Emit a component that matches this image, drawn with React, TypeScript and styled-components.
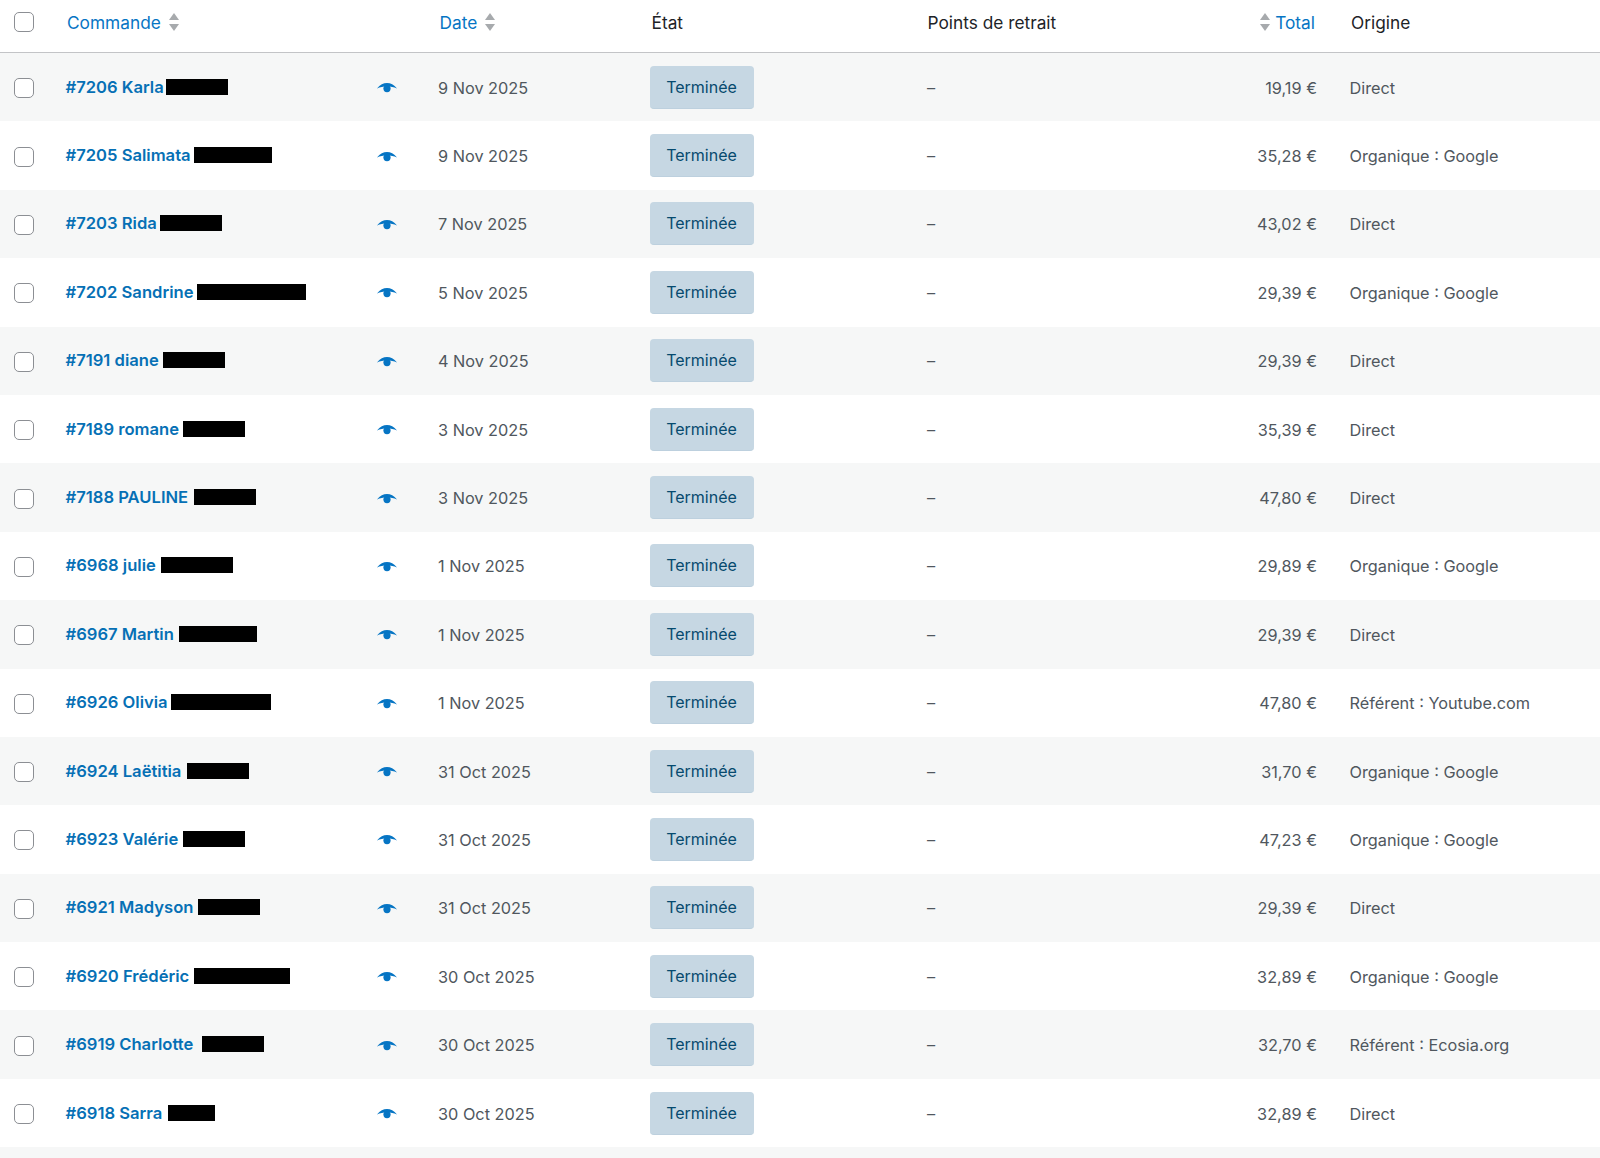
import React from 'react';
import styled, { createGlobalStyle } from 'styled-components';

const GlobalStyle = createGlobalStyle`
  html, body {
    margin: 0;
    padding: 0;
    background: #fff;
    overflow: hidden;
  }
  body {
    font-family: Inter, "Noto Sans", "Liberation Sans", sans-serif;
    font-size: 16.3px;
    color: #50575e;
  }
`;

const COLUMNS = '65.5px 311.5px 61px 212px 276px 176px 215px 32.5px 1fr';

const Table = styled.div`
  width: 1600px;
  height: 1158px;
  overflow: hidden;
`;

const HeaderRow = styled.div`
  display: grid;
  grid-template-columns: ${COLUMNS};
  align-items: center;
  height: 44px;
  padding-bottom: 8px;
  border-bottom: 1px solid #c3c4c7;
  font-size: 17.3px;
  color: #1d2327;
`;

const Row = styled.div<{ $striped: boolean }>`
  display: grid;
  grid-template-columns: ${COLUMNS};
  align-items: center;
  box-sizing: border-box;
  height: 68.4px;
  padding-top: 2px;
  background: ${({ $striped }) => ($striped ? '#f6f7f7' : '#fff')};
`;

const FillerRow = styled.div`
  height: 12px;
  background: #f6f7f7;
`;

const Check = styled.span`
  display: block;
  width: 20px;
  height: 20px;
  margin-left: 14px;
  box-sizing: border-box;
  border: 1.5px solid #8c8f94;
  border-radius: 5px;
  background: #fff;
`;

const HeadCell = styled.div<{ $column: string; $sortable?: boolean }>`
  grid-column: ${({ $column }) => $column};
  display: flex;
  align-items: center;
  gap: 8px;
  padding-left: 1.5px;
  color: ${({ $sortable }) => ($sortable ? '#0675c4' : '#1d2327')};
`;

const TotalHead = styled(HeadCell)`
  justify-content: flex-end;
  gap: 5px;
  padding-right: 2px;
`;

const Order = styled.div`
  display: flex;
  align-items: center;
  gap: 3px;
  margin-top: -3px;
  font-size: 16.6px;
  font-weight: 600;
  color: #0670b5;
  white-space: nowrap;
`;

const Redacted = styled.span<{ $width: number; $gap: number }>`
  display: block;
  width: ${({ $width }) => $width}px;
  height: 16px;
  margin-left: ${({ $gap }) => $gap}px;
  background: #000;
`;

const Preview = styled.svg`
  display: block;
  width: 20px;
  height: 10px;
  fill: #0675c4;
`;

const Cell = styled.div`
  margin-top: -1px;
  white-space: nowrap;
`;

const Dash = styled(Cell)`
  padding-left: 1px;
`;

const Total = styled(Cell)`
  grid-column: 7;
  text-align: right;
`;

const Origin = styled(Cell)`
  grid-column: 9;
`;

const Status = styled.span`
  display: flex;
  align-items: center;
  justify-content: center;
  width: 104px;
  height: 43px;
  margin-top: -2px;
  padding-right: 1px;
  box-sizing: border-box;
  border-radius: 4px;
  border-bottom: 1px solid #bdd0de;
  background: #c6d7e3;
  color: #064a6e;
  font-size: 16px;
`;

const SortSvg = styled.svg`
  display: block;
  width: 10px;
  height: 18px;
  fill: #a7aaad;
`;

const SortIcon = () => (
  <SortSvg viewBox="0 0 10 18">
    <path d="M5 0l5 7H0z" />
    <path d="M5 18l5-7H0z" />
  </SortSvg>
);

const EyeIcon = () => (
  <Preview viewBox="0 0 20 10">
    <path d="M0 5.4C3 1.7 6.5 0 10 0s7 1.7 10 5.4c-3-1.3-6.5-1.9-10-1.9S3 4.1 0 5.4z" />
    <circle cx="10" cy="5.6" r="3.6" />
  </Preview>
);

type OrderRow = {
  id: string;
  name: string;
  redacted: number;
  gap: number;
  date: string;
  total: string;
  origin: string;
};

const orders: OrderRow[] = [
  { id: '#7206', name: 'Karla', redacted: 62, gap: -1, date: '9 Nov 2025', total: '19,19 €', origin: 'Direct' },
  { id: '#7205', name: 'Salimata', redacted: 78, gap: 0, date: '9 Nov 2025', total: '35,28 €', origin: 'Organique : Google' },
  { id: '#7203', name: 'Rida', redacted: 62, gap: 0, date: '7 Nov 2025', total: '43,02 €', origin: 'Direct' },
  { id: '#7202', name: 'Sandrine', redacted: 109, gap: 1, date: '5 Nov 2025', total: '29,39 €', origin: 'Organique : Google' },
  { id: '#7191', name: 'diane', redacted: 62, gap: 1, date: '4 Nov 2025', total: '29,39 €', origin: 'Direct' },
  { id: '#7189', name: 'romane', redacted: 62, gap: 1, date: '3 Nov 2025', total: '35,39 €', origin: 'Direct' },
  { id: '#7188', name: 'PAULINE', redacted: 62, gap: 3, date: '3 Nov 2025', total: '47,80 €', origin: 'Direct' },
  { id: '#6968', name: 'julie', redacted: 72, gap: 2, date: '1 Nov 2025', total: '29,89 €', origin: 'Organique : Google' },
  { id: '#6967', name: 'Martin', redacted: 78, gap: 2, date: '1 Nov 2025', total: '29,39 €', origin: 'Direct' },
  { id: '#6926', name: 'Olivia', redacted: 100, gap: 0, date: '1 Nov 2025', total: '47,80 €', origin: 'Référent : Youtube.com' },
  { id: '#6924', name: 'Laëtitia', redacted: 62, gap: 3, date: '31 Oct 2025', total: '31,70 €', origin: 'Organique : Google' },
  { id: '#6923', name: 'Valérie', redacted: 62, gap: 2, date: '31 Oct 2025', total: '47,23 €', origin: 'Organique : Google' },
  { id: '#6921', name: 'Madyson', redacted: 62, gap: 2, date: '31 Oct 2025', total: '29,39 €', origin: 'Direct' },
  { id: '#6920', name: 'Frédéric', redacted: 96, gap: 2, date: '30 Oct 2025', total: '32,89 €', origin: 'Organique : Google' },
  { id: '#6919', name: 'Charlotte', redacted: 62, gap: 6, date: '30 Oct 2025', total: '32,70 €', origin: 'Référent : Ecosia.org' },
  { id: '#6918', name: 'Sarra', redacted: 47, gap: 3, date: '30 Oct 2025', total: '32,89 €', origin: 'Direct' },
];

export default function App() {
  return (
    <Table>
      <GlobalStyle />
      <HeaderRow>
        <Check />
        <HeadCell $column="2" $sortable>
          Commande <SortIcon />
        </HeadCell>
        <HeadCell $column="4" $sortable>
          Date <SortIcon />
        </HeadCell>
        <HeadCell $column="5">État</HeadCell>
        <HeadCell $column="6">Points de retrait</HeadCell>
        <TotalHead $column="7" $sortable>
          <SortIcon /> Total
        </TotalHead>
        <HeadCell $column="9">Origine</HeadCell>
      </HeaderRow>
      {orders.map((order, index) => (
        <Row key={order.id} $striped={index % 2 === 0}>
          <Check />
          <Order>
            {order.id} {order.name}
            <Redacted $width={order.redacted} $gap={order.gap} />
          </Order>
          <EyeIcon />
          <Cell>{order.date}</Cell>
          <Status>Terminée</Status>
          <Dash>–</Dash>
          <Total>{order.total}</Total>
          <Origin>{order.origin}</Origin>
        </Row>
      ))}
      <FillerRow />
    </Table>
  );
}
